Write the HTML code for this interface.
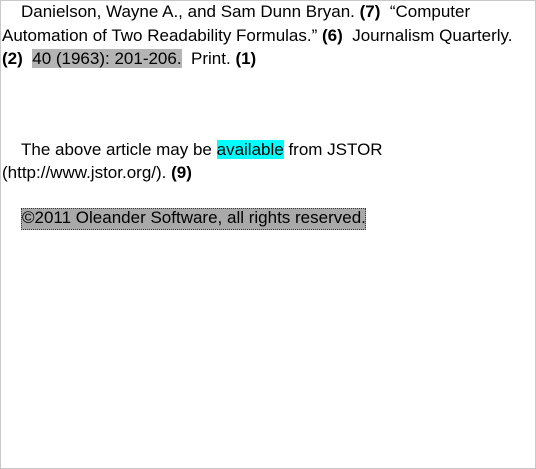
<!DOCTYPE html>
<html><head><style>
html,body{margin:0;padding:0;background:#fff;}
body{width:536px;height:469px;position:relative;overflow:hidden;font-family:"Liberation Sans",sans-serif;font-size:17px;color:#000;}
.frame{position:absolute;left:0;top:0;width:534px;height:467px;border:1px solid #c8c8c8;}
.l{position:absolute;white-space:nowrap;line-height:20px;}
b{font-weight:bold;}
.g{background:#b4b4b4;}
.c{background:#00ffff;}
.cp{position:absolute;left:21px;top:208px;width:343px;height:20px;background:#a9a9a9;border:1px dotted #c00000;}
</style></head><body>
<div class="frame"></div>
<div class="l" style="left:21px;top:2px;">Danielson, Wayne A., and Sam Dunn Bryan. <b>(7)</b>&nbsp; “Computer</div>
<div class="l" style="left:2px;top:26px;">Automation of Two Readability Formulas.” <b>(6)</b>&nbsp; Journalism Quarterly.</div>
<div class="l" style="left:2px;top:49px;"><b>(2)</b>&nbsp; <span class="g">40 (1963): 201-206.</span>&nbsp; Print. <b>(1)</b></div>
<div class="l" style="left:21px;top:140px;">The above article may be <span class="c">available</span> from JSTOR</div>
<div class="l" style="left:2px;top:163px;">(http://www.jstor.org/). <b>(9)</b></div>
<div class="cp"></div>
<div class="l" style="left:22px;top:208px;">©2011 Oleander Software, all rights reserved.</div>
</body></html>
